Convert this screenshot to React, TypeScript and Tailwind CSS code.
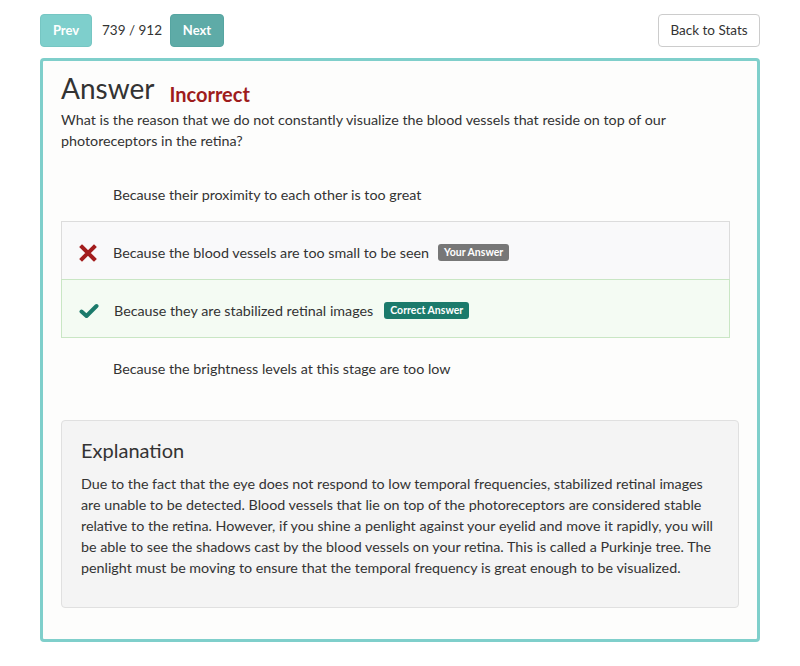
import React from 'react';

type Option = {
  text: string;
  status?: 'wrong' | 'right';
};

const options: Option[] = [
  { text: 'Because their proximity to each other is too great' },
  { text: 'Because the blood vessels are too small to be seen', status: 'wrong' },
  { text: 'Because they are stabilized retinal images', status: 'right' },
  { text: 'Because the brightness levels at this stage are too low' },
];

function CrossIcon() {
  return (
    <svg width="18" height="18" viewBox="0 0 18 18">
      <path d="M3 3 L15 15 M15 3 L3 15" stroke="#a31d1d" strokeWidth="4" strokeLinecap="square" />
    </svg>
  );
}

function CheckIcon() {
  return (
    <svg width="20" height="16" viewBox="0 0 20 16">
      <path d="M2.5 8.5 L7.5 13 L17.5 3" stroke="#1b7a6b" strokeWidth="4" fill="none" strokeLinecap="round" strokeLinejoin="round" />
    </svg>
  );
}

function OptionRow({ option }: { option: Option }) {
  let box = 'border-transparent';
  if (option.status === 'wrong') box = 'border-[#dcdcdc] bg-[#f9f9fa]';
  if (option.status === 'right') box = 'border-[#c9e6c4] bg-[#f4fbf3]';

  return (
    <div className={`flex items-center h-[59px] border -mt-px mr-[9px] pl-[17px] pt-[4px] ${box}`}>
      <div className="w-[34px] flex items-center">
        {option.status === 'wrong' && <CrossIcon />}
        {option.status === 'right' && <CheckIcon />}
      </div>
      <span className={`text-[14.3px] text-[#333] ${option.status === 'right' ? 'ml-[1px]' : ''}`}>{option.text}</span>
      {option.status === 'wrong' && (
        <span className="ml-[9px] rounded-[3px] bg-[#777] px-[6px] py-[2px] text-[10.5px] font-bold leading-[13px] text-white">
          Your Answer
        </span>
      )}
      {option.status === 'right' && (
        <span className="ml-[11px] rounded-[3px] bg-[#1b7a6b] px-[6px] py-[2px] text-[10.5px] font-bold leading-[13px] text-white">
          Correct Answer
        </span>
      )}
    </div>
  );
}

export default function App() {
  return (
    <div className="min-h-[666px] bg-white px-[40px] pt-[14px] font-['Lato','Liberation_Sans',sans-serif] text-[#333]">
      <div className="flex items-center justify-between">
        <div className="flex items-center">
          <button className="h-[33px] w-[52px] rounded-[4px] border border-[#76c6c3] bg-[#7ecfcc] text-[13px] font-bold text-white">
            Prev
          </button>
          <span className="ml-[10px] mr-[8px] text-[13.5px] text-[#333]">739 / 912</span>
          <button className="h-[33px] w-[54px] rounded-[4px] border border-[#56a5a1] bg-[#5eaba7] text-[13px] font-bold text-white">
            Next
          </button>
        </div>
        <button className="h-[33px] w-[102px] rounded-[4px] border border-[#cccccc] bg-white text-[13.5px] text-[#333]">
          Back to Stats
        </button>
      </div>

      <div className="mt-[11px] rounded-[4px] border-[3px] border-[#7fcfcb] bg-[#fdfdfc] px-[18px] pt-[10px] pb-[31px]">
        <div className="flex items-end">
          <h1 className="text-[28px] leading-[34px] text-[#333]">Answer</h1>
          <span className="ml-[15px] mb-[-3px] text-[20px] font-bold leading-[28px] text-[#9e1c1c]">Incorrect</span>
        </div>
        <p className="mt-[4px] text-[14.3px] leading-[21px] text-[#333]">
          What is the reason that we do not constantly visualize the blood vessels that reside on top of our photoreceptors in the retina?
        </p>

        <div className="mt-[13px]">
          {options.map((o) => (
            <OptionRow key={o.text} option={o} />
          ))}
        </div>

        <div className="mt-[24px] rounded-[4px] border border-[#e0e0e0] bg-[#f4f4f4] px-[19px] pt-[16px] pb-[29px]">
          <h2 className="text-[20px] leading-[26px] text-[#333]">Explanation</h2>
          <p className="mt-[10px] text-[14.3px] leading-[21px] text-[#333]">
            Due to the fact that the eye does not respond to low temporal frequencies, stabilized retinal images are unable to be detected. Blood vessels that lie on top of the photoreceptors are considered stable relative to the retina. However, if you shine a penlight against your eyelid and move it rapidly, you will be able to see the shadows cast by the blood vessels on your retina. This is called a Purkinje tree. The penlight must be moving to ensure that the temporal frequency is great enough to be visualized.
          </p>
        </div>
      </div>
    </div>
  );
}
